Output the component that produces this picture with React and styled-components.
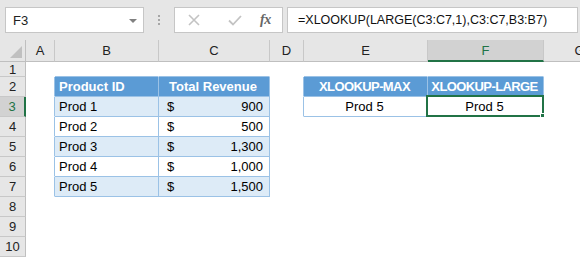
import React from 'react';
import styled, { createGlobalStyle } from 'styled-components';

const GREEN = '#217346';
const BLUE = '#9bc2e6';
const HEAD_BLUE = '#5b9bd5';
const BAND = '#ddebf7';

const GlobalStyle = createGlobalStyle`
  html, body {
    margin: 0;
    padding: 0;
    background: #ffffff;
    overflow: hidden;
  }
  body {
    font-family: "Liberation Sans", Arial, sans-serif;
  }
`;

const COLUMNS = ['', 'A', 'B', 'C', 'D', 'E', 'F', 'G'];

const products = [
  { id: 'Prod 1', revenue: '900' },
  { id: 'Prod 2', revenue: '500' },
  { id: 'Prod 3', revenue: '1,300' },
  { id: 'Prod 4', revenue: '1,000' },
  { id: 'Prod 5', revenue: '1,500' },
];

const App = () => {
  // build the cells of rows 1..10 (columns A..G)
  const rows = [];
  for (let r = 1; r <= 10; r++) {
    const cells = [];
    const inLeft = r >= 2 && r <= 7;
    const inRight = r >= 2 && r <= 3;
    const product = products[r - 3];
    const fill = r === 2 ? HEAD_BLUE : r % 2 === 1 && inLeft ? BAND : null;

    // A
    cells.push(<Cell key="A" $right={inLeft ? BLUE : null} />);
    // B
    cells.push(
      <Cell
        key="B"
        $fill={inLeft ? fill : null}
        $right={inLeft ? BLUE : null}
        $bottom={r <= 7 ? BLUE : null}
        $head={r === 2}
      >
        {r === 2 ? 'Product ID' : product ? product.id : ''}
      </Cell>
    );
    // C
    cells.push(
      <Cell
        key="C"
        $fill={inLeft ? fill : null}
        $right={inLeft ? BLUE : null}
        $bottom={r <= 7 ? BLUE : null}
        $head={r === 2}
        $align={r === 2 ? 'center' : 'space-between'}
      >
        {r === 2 ? 'Total Revenue' : product ? (
          <>
            <Dollar>$</Dollar>
            <span>{product.revenue}</span>
          </>
        ) : ''}
      </Cell>
    );
    // D
    cells.push(<Cell key="D" $right={inRight ? BLUE : null} />);
    // E
    cells.push(
      <Cell
        key="E"
        $fill={r === 2 ? HEAD_BLUE : null}
        $right={inRight ? BLUE : null}
        $bottom={r <= 3 ? BLUE : null}
        $head={r === 2}
        $tight
        $align="center"
      >
        {r === 2 ? 'XLOOKUP-MAX' : r === 3 ? 'Prod 5' : ''}
      </Cell>
    );
    // F
    cells.push(
      <Cell
        key="F"
        $fill={r === 2 ? HEAD_BLUE : null}
        $right={inRight ? BLUE : null}
        $bottom={r <= 3 ? BLUE : null}
        $head={r === 2}
        $tight
        $align="center"
      >
        {r === 2 ? 'XLOOKUP-LARGE' : r === 3 ? 'Prod 5' : ''}
        {r === 3 && (
          <Selection>
            <Handle />
          </Selection>
        )}
      </Cell>
    );
    // G
    cells.push(<Cell key="G" />);

    rows.push(
      <React.Fragment key={r}>
        <RowHead $active={r === 3}>{r}</RowHead>
        {cells}
      </React.Fragment>
    );
  }

  return (
    <>
      <GlobalStyle />
      <Window>
        <FormulaBar>
          <NameBox>
            <span>F3</span>
            <DropArrow />
          </NameBox>
          <Grip>
            <i />
            <i />
            <i />
          </Grip>
          <ButtonBox>
            <IconButton>
              <svg width="12" height="12" viewBox="0 0 12 12">
                <path d="M1 1 L11 11 M11 1 L1 11" stroke="#c3c3c3" strokeWidth="1.6" fill="none" />
              </svg>
            </IconButton>
            <IconButton>
              <svg width="14" height="11" viewBox="0 0 14 11">
                <path d="M1 5.5 L5 9.5 L13 1" stroke="#c3c3c3" strokeWidth="1.8" fill="none" />
              </svg>
            </IconButton>
            <Fx>fx</Fx>
          </ButtonBox>
          <FormulaBox>=XLOOKUP(LARGE(C3:C7,1),C3:C7,B3:B7)</FormulaBox>
        </FormulaBar>

        <Sheet>
          {COLUMNS.map((c, i) =>
            i === 0 ? (
              <Corner key="corner">
                <svg width="12" height="12" viewBox="0 0 12 12">
                  <path d="M12 0 L12 12 L0 12 Z" fill="#c0c0c0" />
                </svg>
              </Corner>
            ) : (
              <ColHead key={c} $active={c === 'F'}>
                {c}
              </ColHead>
            )
          )}
          {rows}
        </Sheet>
      </Window>
    </>
  );
};

export default App;

// ** styled definitions **
const Window = styled.div`
  width: 580px;
  height: 257px;
  display: flex;
  flex-direction: column;
  background: #e6e6e6;
  overflow: hidden;
`;

const FormulaBar = styled.div`
  height: 40px;
  flex: none;
  display: flex;
  align-items: flex-start;
  padding: 7px 0 0 5px;
  box-sizing: border-box;
`;

const Field = styled.div`
  height: 26px;
  flex: none;
  box-sizing: border-box;
  background: #ffffff;
  border: 1px solid #c6c6c6;
  display: flex;
  align-items: center;
`;

const NameBox = styled(Field)`
  width: 139px;
  padding: 0 6px 0 7px;
  justify-content: space-between;
  font-size: 13px;
  color: #222;
`;

const DropArrow = styled.span`
  width: 0;
  height: 0;
  border-left: 4px solid transparent;
  border-right: 4px solid transparent;
  border-top: 4px solid #808080;
  margin-top: 1px;
`;

const Grip = styled.div`
  width: 30px;
  height: 26px;
  flex: none;
  display: flex;
  flex-direction: column;
  align-items: center;
  justify-content: center;
  gap: 2px;

  i {
    display: block;
    width: 2px;
    height: 2px;
    background: #a6a6a6;
  }
`;

const ButtonBox = styled(Field)`
  width: 109px;
  padding: 0 0 0 13px;
`;

const IconButton = styled.span`
  width: 36px;
  display: flex;
  justify-content: center;
  align-items: center;
  &:first-child {
    width: 12px;
    margin-right: 17px;
  }
`;

const Fx = styled.span`
  font-family: "Liberation Serif", "Times New Roman", serif;
  font-style: italic;
  font-weight: bold;
  font-size: 14px;
  color: #666666;
  margin-left: 7px;
  letter-spacing: -0.5px;
`;

const FormulaBox = styled(Field)`
  width: 291px;
  margin-left: 4px;
  padding-left: 10px;
  font-size: 12.5px;
  color: #111;
  white-space: nowrap;
  overflow: hidden;
`;

const Sheet = styled.div`
  flex: 1;
  display: grid;
  grid-template-columns: 26px 29px 104px 111px 34px 124px 116px 72px;
  grid-template-rows: 22px 15px repeat(9, 20px);
  background: #ffffff;
  font-size: 13px;
`;

const HeadBase = styled.div`
  box-sizing: border-box;
  background: #e6e6e6;
  display: flex;
  align-items: center;
  justify-content: center;
  color: #222;
  font-size: 13px;
`;

const Corner = styled(HeadBase)`
  border-right: 1px solid #bfbfbf;
  border-bottom: 1px solid #bfbfbf;
  align-items: flex-end;
  justify-content: flex-end;
  padding: 0 3px 3px 0;
`;

const ColHead = styled(HeadBase)`
  border-right: 1px solid #c8c8c8;
  border-bottom: ${(p) => (p.$active ? `2px solid ${GREEN}` : '1px solid #bfbfbf')};
  background: ${(p) => (p.$active ? '#d2d2d2' : '#e6e6e6')};
  color: ${(p) => (p.$active ? GREEN : '#222')};
  padding-top: ${(p) => (p.$active ? '1px' : '0')};
`;

const RowHead = styled(HeadBase)`
  border-bottom: 1px solid #c8c8c8;
  border-right: ${(p) => (p.$active ? `2px solid ${GREEN}` : '1px solid #bfbfbf')};
  background: ${(p) => (p.$active ? '#d2d2d2' : '#e6e6e6')};
  color: ${(p) => (p.$active ? GREEN : '#222')};
`;

const Cell = styled.div`
  position: relative;
  box-sizing: border-box;
  display: flex;
  align-items: center;
  justify-content: ${(p) => p.$align || 'flex-start'};
  padding: 0 6px 0 4px;
  background: ${(p) => p.$fill || '#ffffff'};
  border-right: 1px solid ${(p) => p.$right || 'transparent'};
  border-bottom: 1px solid ${(p) => p.$bottom || 'transparent'};
  color: ${(p) => (p.$head ? '#ffffff' : '#000000')};
  font-weight: ${(p) => (p.$head ? 'bold' : 'normal')};
  letter-spacing: ${(p) => (p.$head && p.$tight ? '-0.6px' : '0')};
  white-space: nowrap;
`;

const Dollar = styled.span`
  padding-left: 4px;
`;

const Selection = styled.div`
  position: absolute;
  top: -2px;
  left: -2px;
  right: -1px;
  bottom: -1px;
  border: 2px solid ${GREEN};
  pointer-events: none;
`;

const Handle = styled.div`
  position: absolute;
  right: -5px;
  bottom: -5px;
  width: 5px;
  height: 5px;
  background: ${GREEN};
  border: 1px solid #ffffff;
`;
// ** styled definitions **
